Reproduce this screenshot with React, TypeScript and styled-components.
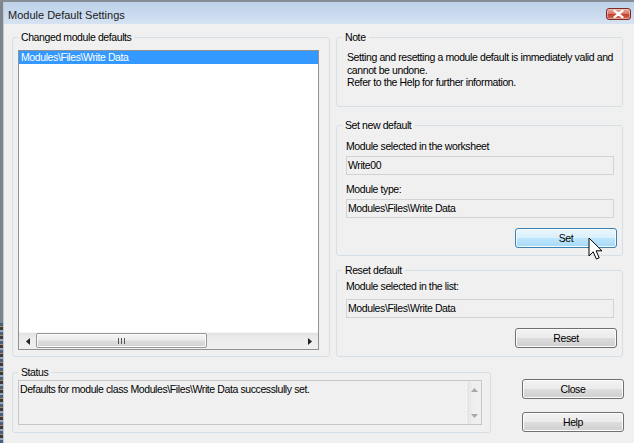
import React from 'react';
import styled, { createGlobalStyle } from 'styled-components';

const GlobalStyle = createGlobalStyle`
  html, body { margin: 0; padding: 0; }
  body {
    width: 634px; height: 443px; overflow: hidden; background: #f0f0f0;
    font-family: "Liberation Sans", Arial, sans-serif; font-size: 10.5px;
    letter-spacing: -0.4px; color: #000;
  }
  * { box-sizing: border-box; }
`;

const Screen = styled.div`
  position: relative;
  display: flex;
  width: 634px;
  height: 443px;
  border-top: 2px solid #868c93;
  overflow: hidden;
`;

const Backdrop = styled.div`
  width: 3px;
  flex: none;
  display: flex;
  flex-direction: column;
  background: #7d848c;
`;

const BackdropStripes = styled.div`
  margin-top: auto;
  height: 120px;
  background: repeating-linear-gradient(180deg, #4b5f80 0 3px, #b08a4e 3px 4px, #3b3b3b 4px 7px, #9aa6b8 7px 9px);
`;

const Window = styled.div`
  flex: 1;
  display: flex;
  flex-direction: column;
  border-left: 1px solid #c3c9d0;
  background: #f0f0f0;
`;

const TitleBar = styled.div`
  height: 22px;
  flex: none;
  display: flex;
  align-items: flex-start;
  justify-content: space-between;
  padding: 0 3px 0 4px;
  background: linear-gradient(180deg, #bdd1e9 0%, #c9daee 55%, #d6e3f2 100%);
`;

const Title = styled.div`
  font-size: 11px;
  letter-spacing: 0;
  line-height: 13px;
  margin-top: 6.5px;
  color: #1a1a1a;
`;

const CloseBox = styled.div`
  width: 25px;
  height: 12px;
  margin-top: 6px;
  border: 1px solid #7a2a28;
  border-radius: 3px;
  background: linear-gradient(180deg, #e8a99e 0%, #d77a6b 45%, #c2412f 55%, #cf6a55 100%);
  box-shadow: inset 0 0 0 1px rgba(255, 220, 210, 0.5);
  display: flex;
  align-items: center;
  justify-content: center;
`;

const Client = styled.div`
  flex: 1;
  display: flex;
  flex-direction: column;
  padding: 7px 0 0 8px;
`;

const TopRow = styled.div`
  display: grid;
  grid-template-columns: 318px 287px;
  column-gap: 6px;
  height: 326px;
`;

const RightColumn = styled.div`
  display: flex;
  flex-direction: column;
`;

const Group = styled.fieldset<{ $h: number; $mt?: number; $w?: number }>`
  margin: ${p => p.$mt ?? 0}px 0 0 0;
  padding: 0;
  min-width: 0;
  width: ${p => (p.$w ? `${p.$w}px` : 'auto')};
  height: ${p => p.$h}px;
  flex: none;
  border: 1px solid #d5dfe5;
  border-radius: 3px;
  display: flex;
  flex-direction: column;
`;

const Legend = styled.legend`
  margin-left: 5px;
  padding: 0 3px;
  line-height: 13px;
  height: 13px;
`;

const GroupBody = styled.div<{ $pad: string }>`
  flex: 1;
  display: flex;
  flex-direction: column;
  padding: ${p => p.$pad};
  min-height: 0;
`;

const ListBox = styled.div`
  flex: 1;
  display: flex;
  flex-direction: column;
  width: 301px;
  background: #fff;
  border: 1px solid #8f9196;
`;

const ListItems = styled.div`
  flex: 1;
`;

const ListItem = styled.div<{ $selected?: boolean }>`
  height: 13px;
  line-height: 13px;
  padding-left: 2px;
  white-space: nowrap;
  background: ${p => (p.$selected ? '#3399ff' : 'transparent')};
  color: ${p => (p.$selected ? '#fff' : '#000')};
`;

const HScroll = styled.div`
  height: 17px;
  flex: none;
  display: flex;
  align-items: stretch;
  background: linear-gradient(180deg, #e2e2e2 0%, #ececec 35%, #f0f0f0 100%);
  border-top: 1px solid #f5f5f5;
`;

const ArrowCell = styled.div<{ $w?: number; $h?: number }>`
  width: ${p => p.$w ?? 17}px;
  height: ${p => (p.$h ? `${p.$h}px` : 'auto')};
  flex: none;
  display: flex;
  align-items: center;
  justify-content: center;
`;

const Track = styled.div`
  flex: 1;
  display: flex;
  align-items: stretch;
`;

const Thumb = styled.div`
  width: 171px;
  margin: 0 0 1px 0;
  border: 1px solid #979797;
  border-radius: 2px;
  background: linear-gradient(180deg, #f6f6f6 0%, #ececec 45%, #dcdcdc 55%, #d2d2d2 100%);
  box-shadow: inset 0 0 0 1px #fbfbfb;
  display: flex;
  align-items: center;
  justify-content: center;
`;

const NoteText = styled.p`
  margin: 0;
  line-height: 12.5px;
`;

const FieldLabel = styled.div<{ $mt?: number }>`
  line-height: 13px;
  height: 13px;
  margin-top: ${p => p.$mt ?? 0}px;
  white-space: nowrap;
`;

const ReadOnlyField = styled.div<{ $mt?: number }>`
  width: 268px;
  height: 19px;
  margin-top: ${p => p.$mt ?? 3}px;
  line-height: 17px;
  padding: 0 1px;
  border: 1px solid #d3d3d3;
  background: #f0f0f0;
  white-space: nowrap;
`;

const ButtonRow = styled.div<{ $mt: number }>`
  display: flex;
  justify-content: flex-end;
  margin-top: ${p => p.$mt}px;
`;

const Button = styled.button<{ $hover?: boolean }>`
  width: 102px;
  height: 20px;
  padding: 0;
  font: inherit;
  letter-spacing: inherit;
  color: #000;
  border: 1px solid ${p => (p.$hover ? '#3c7fb1' : '#707070')};
  border-radius: 3px;
  background: ${p =>
    p.$hover
      ? 'linear-gradient(180deg, #eaf6fd 0%, #d9f0fc 50%, #bee6fd 50%, #a7d9f5 100%)'
      : 'linear-gradient(180deg, #f2f2f2 0%, #ebebeb 50%, #dddddd 50%, #cfcfcf 100%)'};
  box-shadow: inset 0 0 0 1px ${p => (p.$hover ? '#f4fbff' : '#fcfcfc')};
`;

const BottomRow = styled.div`
  display: flex;
  margin-top: 9px;
  gap: 31px;
`;

const StatusBox = styled.div`
  width: 464px;
  height: 45px;
  display: flex;
  border: 1px solid #c4c6c9;
  background: #f0f0f0;
`;

const StatusText = styled.div`
  flex: 1;
  padding: 2px 1px;
  line-height: 13px;
  white-space: nowrap;
`;

const VScroll = styled.div`
  width: 15px;
  flex: none;
  display: flex;
  flex-direction: column;
  justify-content: space-between;
  background: linear-gradient(90deg, #e4e4e4 0%, #eeeeee 40%, #f0f0f0 100%);
  border-left: 1px solid #f6f6f6;
`;

const SideButtons = styled.div`
  width: 101px;
  display: flex;
  flex-direction: column;
  gap: 13px;
  padding-top: 13px;
`;

const Cursor = styled.svg`
  position: absolute;
  left: 588px;
  top: 235px;
`;

const Tri = ({ dir, color }: { dir: 'left' | 'right' | 'up' | 'down'; color: string }) => {
  const pts = {
    left: '4,0 4,7 0,3.5',
    right: '0,0 0,7 4,3.5',
    up: '0,4 7,4 3.5,0',
    down: '0,0 7,0 3.5,4',
  }[dir];
  const horiz = dir === 'left' || dir === 'right';
  return (
    <svg width={horiz ? 4 : 7} height={horiz ? 7 : 4} viewBox={horiz ? '0 0 4 7' : '0 0 7 4'}>
      <polygon points={pts} fill={color} />
    </svg>
  );
};

export default function App() {
  return (
    <>
      <GlobalStyle />
      <Screen>
        <Backdrop>
          <BackdropStripes />
        </Backdrop>
        <Window>
          <TitleBar>
            <Title>Module Default Settings</Title>
            <CloseBox>
              <svg width="11" height="8" viewBox="0 0 11 8">
                <path d="M1.5 0.8 L9.5 7.2 M9.5 0.8 L1.5 7.2" stroke="#fff" strokeWidth="2.2" strokeLinecap="round" />
              </svg>
            </CloseBox>
          </TitleBar>
          <Client>
            <TopRow>
              <Group $h={326}>
                <Legend>Changed module defaults</Legend>
                <GroupBody $pad="6px 0 6px 5px">
                  <ListBox>
                    <ListItems>
                      <ListItem $selected>Modules\Files\Write Data</ListItem>
                    </ListItems>
                    <HScroll>
                      <ArrowCell>
                        <Tri dir="left" color="#222" />
                      </ArrowCell>
                      <Track>
                        <Thumb>
                          <svg width="7" height="6" viewBox="0 0 7 6">
                            <path d="M0.5 0 V6 M3.5 0 V6 M6.5 0 V6" stroke="#555" strokeWidth="1" />
                          </svg>
                        </Thumb>
                      </Track>
                      <ArrowCell>
                        <Tri dir="right" color="#222" />
                      </ArrowCell>
                    </HScroll>
                  </ListBox>
                </GroupBody>
              </Group>
              <RightColumn>
                <Group $h={76}>
                  <Legend>Note</Legend>
                  <GroupBody $pad="7px 4px 0 10px">
                    <NoteText>
                      Setting and resetting a module default is immediately valid and
                      <br />
                      cannot be undone.
                    </NoteText>
                    <NoteText>Refer to the Help for further information.</NoteText>
                  </GroupBody>
                </Group>
                <Group $h={137} $mt={12}>
                  <Legend>Set new default</Legend>
                  <GroupBody $pad="8px 5px 0 9px">
                    <FieldLabel>Module selected in the worksheet</FieldLabel>
                    <ReadOnlyField>Write00</ReadOnlyField>
                    <FieldLabel $mt={8}>Module type:</FieldLabel>
                    <ReadOnlyField>Modules\Files\Write Data</ReadOnlyField>
                    <ButtonRow $mt={10}>
                      <Button $hover>Set</Button>
                    </ButtonRow>
                  </GroupBody>
                </Group>
                <Group $h={93} $mt={8}>
                  <Legend>Reset default</Legend>
                  <GroupBody $pad="3px 5px 0 9px">
                    <FieldLabel>Module selected in the list:</FieldLabel>
                    <ReadOnlyField $mt={6}>Modules\Files\Write Data</ReadOnlyField>
                    <ButtonRow $mt={10}>
                      <Button>Reset</Button>
                    </ButtonRow>
                  </GroupBody>
                </Group>
              </RightColumn>
            </TopRow>
            <BottomRow>
              <Group $h={67} $w={479}>
                <Legend>Status</Legend>
                <GroupBody $pad="1px 0 0 5px">
                  <StatusBox>
                    <StatusText>Defaults for module class Modules\Files\Write Data successlully set.</StatusText>
                    <VScroll>
                      <ArrowCell $w={15} $h={17}>
                        <Tri dir="up" color="#a8a8a8" />
                      </ArrowCell>
                      <ArrowCell $w={15} $h={17}>
                        <Tri dir="down" color="#a8a8a8" />
                      </ArrowCell>
                    </VScroll>
                  </StatusBox>
                </GroupBody>
              </Group>
              <SideButtons>
                <Button>Close</Button>
                <Button>Help</Button>
              </SideButtons>
            </BottomRow>
          </Client>
        </Window>
        <Cursor width="16" height="24" viewBox="0 0 16 24">
          <path
            d="M1 1 V19 L5.2 14.8 L8.4 22 L11.2 20.8 L8.1 13.8 L14 13.8 Z"
            fill="#fff"
            stroke="#000"
            strokeWidth="1"
            strokeLinejoin="miter"
          />
        </Cursor>
      </Screen>
    </>
  );
}
